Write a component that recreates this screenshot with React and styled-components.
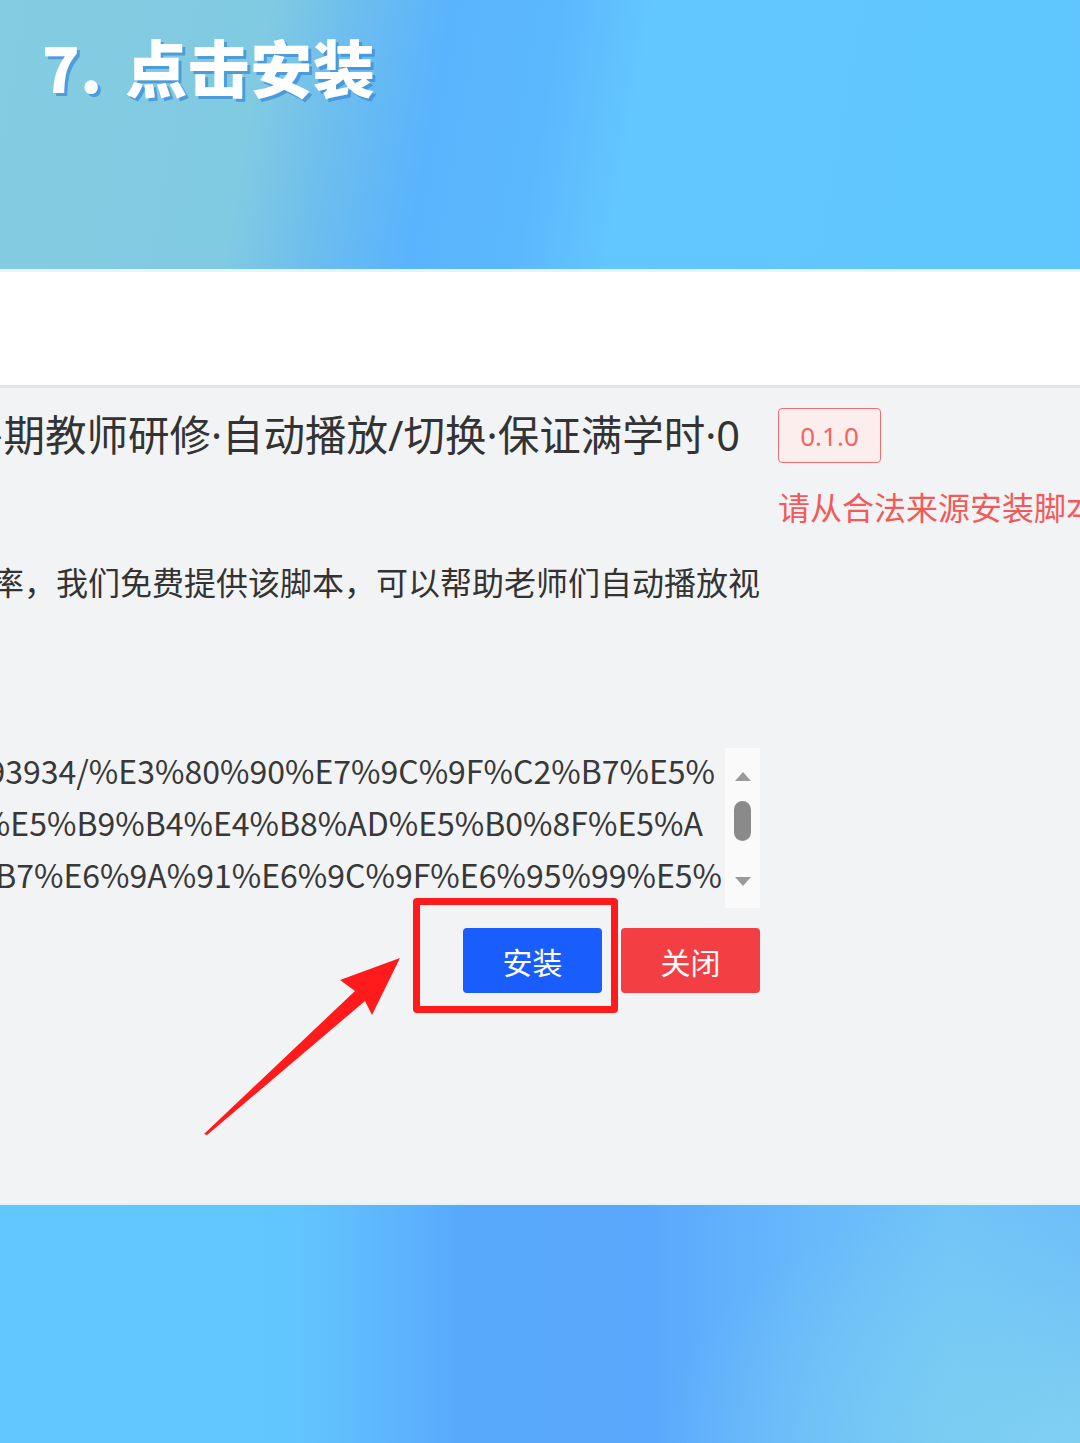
import React from 'react';
import styled, { createGlobalStyle } from 'styled-components';

const GlobalStyle = createGlobalStyle`
  html, body { margin: 0; padding: 0; background: #f2f3f5; }
  body { font-family: "Noto Sans", "Noto Sans CJK SC", sans-serif; }
`;

const Page = styled.div`
  width: 1080px;
  height: 1443px;
  overflow: hidden;
  display: flex;
  flex-direction: column;
`;

const Header = styled.header`
  height: 269px;
  flex-shrink: 0;
  padding: 24px 0 0 42px;
  box-sizing: border-box;
  background: linear-gradient(100deg, #84cce0 0%, #80cae2 24%, #6cbdef 32%, #5ab4fd 40%, #5cb8fd 50%, #62c6ff 58%, #60c6fe 100%);
`;

const HeaderTitle = styled.h1`
  margin: 0;
  font-family: "Noto Sans CJK SC", sans-serif;
  font-weight: 900;
  font-size: 62px;
  line-height: 84px;
  color: #fff;
  letter-spacing: 0.5px;
  word-spacing: 8px;
  text-shadow: 3px 3px 0 rgba(60, 140, 215, 0.75);
`;

const WhiteBand = styled.div`
  height: 113px;
  flex-shrink: 0;
  background: #fff;
  border-top: 3px solid #e6f5fb;
  border-bottom: 3px solid #e3e5e8;
`;

const Panel = styled.main`
  position: relative;
  height: 815px;
  flex-shrink: 0;
  background: #f2f3f5;
  padding-top: 20px;
  box-sizing: border-box;
  display: flex;
  flex-direction: column;
`;

const TitleRow = styled.div`
  display: flex;
  align-items: center;
  height: 55px;
`;

const ClipLine = styled.div`
  display: flex;
  justify-content: flex-end;
  overflow: hidden;
  white-space: nowrap;
  width: ${({ w }) => w}px;
  flex-shrink: 0;
  color: ${({ color }) => color || '#333'};
  font-size: ${({ size }) => size}px;
  line-height: ${({ lh }) => lh}px;
`;

const Badge = styled.span`
  margin-left: 38px;
  width: 103px;
  height: 55px;
  box-sizing: border-box;
  border: 1.5px solid #f26d6d;
  background: #fdeeee;
  border-radius: 4px;
  color: #f26565;
  font-size: 26px;
  display: flex;
  align-items: center;
  justify-content: center;
`;

const Note = styled.div`
  margin-top: 25px;
  padding-left: 778px;
  white-space: nowrap;
  color: #f25a5a;
  font-size: 32px;
  line-height: 40px;
`;

const Desc = styled.div`
  margin-top: 35px;
`;

const TextBox = styled.div`
  margin-top: 145px;
  width: 760px;
  height: 160px;
  display: flex;
`;

const TextLines = styled.div`
  flex: 1;
  margin-top: -4px;
  font-family: "Noto Sans CJK SC", sans-serif;
`;

const Scrollbar = styled.div`
  width: 35px;
  background: #fafafa;
  display: flex;
  flex-direction: column;
  align-items: center;
  padding: 24px 0 22px;
  box-sizing: border-box;
`;

const Thumb = styled.div`
  width: 17px;
  height: 40px;
  border-radius: 9px;
  background: #8a8a8a;
  margin: 20px 0 auto;
`;

const ButtonRow = styled.div`
  margin-top: 20px;
  width: 760px;
  display: flex;
  justify-content: flex-end;
  gap: 19px;
`;

const Button = styled.button`
  width: 139px;
  height: 65px;
  border: none;
  border-radius: 4px;
  background: ${({ kind }) => (kind === 'danger' ? '#f33f43' : '#195dfc')};
  color: #fff;
  font-family: "Noto Sans CJK SC", sans-serif;
  font-size: 30px;
  padding: 0;
`;

const Highlight = styled.div`
  position: relative;
  &::after {
    content: '';
    position: absolute;
    left: -50px;
    right: -16px;
    top: -30px;
    bottom: -20px;
    border: 7px solid #ff1b1b;
    border-radius: 4px;
  }
`;

const Arrow = styled.svg`
  position: absolute;
  left: 200px;
  top: 567px;
  pointer-events: none;
`;

const Footer = styled.footer`
  flex: 1;
  border-top: 2px solid #dff3fb;
  background:
    radial-gradient(ellipse 420px 260px at 100% 100%, rgba(130, 210, 240, 0.9), rgba(130, 210, 240, 0) 100%),
    linear-gradient(90deg, #62c7fe 0%, #62c6fe 27%, #5eb6fd 36%, #58a8fc 43%, #5aa8fd 60%, #66b8fb 74%, #70c4f7 88%, #6cbcfa 100%);
`;

const urlLines = [
  { text: 'https://greasyfork.org/scripts/493934/%E3%80%90%E7%9C%9F%C2%B7%E5%', w: 715 },
  { text: '%B9%B4%E5%B9%B4%E4%B8%AD%E5%B0%8F%E5%A', w: 703 },
  { text: 'D%A6%C2%B7%E6%9A%91%E6%9C%9F%E6%95%99%E5%', w: 722 },
];

export default function App() {
  return (
    <Page>
      <GlobalStyle />
      <Header>
        <HeaderTitle>7. 点击安装</HeaderTitle>
      </Header>
      <WhiteBand />
      <Panel>
        <TitleRow>
          <ClipLine w={740} size={41.5} lh={55}>【真】·2024年中小学·暑期教师研修·自动播放/切换·保证满学时·0</ClipLine>
          <Badge>0.1.0</Badge>
        </TitleRow>
        <Note>请从合法来源安装脚本</Note>
        <Desc>
          <ClipLine w={760} size={32} lh={40} color="#333">为提高老师们的学习效率，我们免费提供该脚本，可以帮助老师们自动播放视</ClipLine>
        </Desc>
        <TextBox>
          <TextLines>
            {urlLines.map((l) => (
              <ClipLine key={l.text} w={l.w} size={32} lh={52} color="#383838">{l.text}</ClipLine>
            ))}
          </TextLines>
          <Scrollbar>
            <svg width="16" height="9" viewBox="0 0 16 9"><path d="M8 0 L16 9 L0 9 Z" fill="#9a9a9a" /></svg>
            <Thumb />
            <svg width="16" height="9" viewBox="0 0 16 9"><path d="M0 0 L16 0 L8 9 Z" fill="#9a9a9a" /></svg>
          </Scrollbar>
        </TextBox>
        <ButtonRow>
          <Highlight>
            <Button>安装</Button>
          </Highlight>
          <Button kind="danger">关闭</Button>
        </ButtonRow>
        <Arrow width="205" height="182" viewBox="0 0 205 182">
          <polygon points="200,3 140,25 155,36 4,179 7,180 165,46 172,60" fill="#ff1b1b" />
        </Arrow>
      </Panel>
      <Footer />
    </Page>
  );
}
